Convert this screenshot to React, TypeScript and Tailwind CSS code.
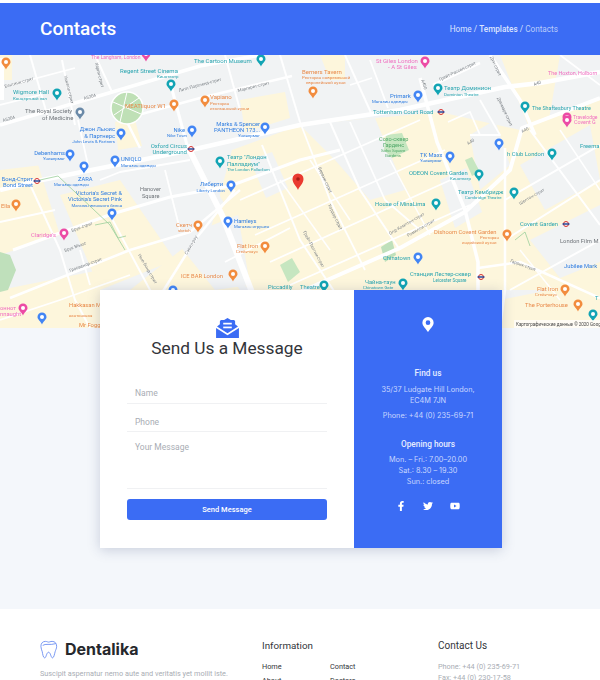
import React from 'react';
import { FaFacebookF, FaTwitter, FaYoutube } from 'react-icons/fa';

const BLUE = '#2f7de1';
const TEAL = '#2aa5b0';
const ORANGE = '#e98a4a';
const PINK = '#f06fc0';
const GRAY = '#70757a';
const GREEN = '#4fa868';
const P_BLUE = '#4285f4';
const P_TEAL = '#12a4b4';
const P_ORANGE = '#f28c3e';
const P_PINK = '#ec4ba5';

// coordinates below are page coordinates, the map's viewBox starts at y=55
const yellowBlocks = [
  '232,150 300,125 440,112 520,130 600,100 600,290 250,290 205,250',
  '0,160 36,158 60,235 0,255',
  '60,195 120,180 175,260 100,290',
  '130,290 200,235 240,290',
  '240,100 285,92 290,118 245,132',
  '500,55 560,55 548,125 528,125',
  '500,300 600,280 600,328 500,328',
  '0,290 100,270 100,328 0,328',
  '115,122 134,116 142,146 118,150',
  '320,55 345,55 345,80 330,80',
  '0,55 12,55 12,80 0,80',
];

const grayBlocks = [
  '250,160 272,152 288,188 266,198',
  '300,125 375,118 405,190 370,200 335,160',
  '440,180 466,168 482,212 455,228',
  '520,165 590,125 600,180 545,210',
  '530,240 600,205 600,262 560,278',
  '125,165 195,152 225,205 160,222',
  '175,240 238,215 250,285 215,290',
  '0,125 70,125 85,160 0,170',
  '470,135 495,120 510,165 480,190',
];

const mainRoads: [string, number][] = [
  ['0,190 37,181 191,150 300,125 400,110 505,87 540,83 600,72', 4.5],
  ['187,145 222,215 255,300', 6],
  ['170,82 187,145', 3],
  ['127,122 140,148', 2.5],
  ['0,125 92,98 200,66 260,55', 3.5],
  ['127,118 200,98 292,76', 2.5],
  ['13,250 112,214 170,197 230,186 300,160 340,150', 3],
  ['10,298 130,250 190,232 240,190', 2.5],
  ['300,292 400,248 465,212 510,170 522,128 600,98', 4],
  ['420,78 437,142 465,210 478,262 478,290', 3.5],
  ['490,55 520,100 535,135', 3.5],
  ['505,148 505,290 500,328', 2.5],
  ['478,268 520,262 600,298', 2.5],
  ['160,296 195,240 235,190', 2.5],
  ['110,215 150,290 170,328', 2],
  ['28,180 60,250 75,300 90,328', 2],
  ['262,145 300,240 340,300', 2],
  ['330,122 360,190 400,250', 2],
  ['300,122 330,200 365,270', 1.8],
  ['350,122 385,200 420,230', 1.8],
  ['240,200 420,120', 1.8],
  ['255,235 445,150', 1.8],
  ['270,262 455,178', 1.8],
  ['290,285 470,205', 1.8],
  ['280,180 330,250', 1.5],
  ['310,160 350,220', 1.5],
  ['390,160 430,235', 1.5],
  ['505,200 600,145', 2],
  ['505,240 600,180', 2],
  ['510,290 600,240', 2],
  ['530,130 600,225', 2],
  ['560,130 600,190', 1.5],
  ['520,250 560,300', 1.5],
  ['433,85 480,63', 2.5],
  ['480,100 500,135 470,135', 1.8],
  ['448,122 470,112 480,135', 1.8],
  ['30,55 48,118', 2],
  ['62,60 75,125', 2],
  ['95,55 112,92', 2],
  ['0,88 75,68', 1.8],
  ['0,105 40,95', 1.8],
  ['78,120 88,165', 1.8],
  ['225,55 240,110', 2],
  ['280,55 300,122', 2],
  ['345,55 372,115', 2],
  ['560,55 600,85', 1.8],
  ['0,222 55,210', 1.8],
  ['100,180 120,172 190,160', 1.8],
  ['165,170 180,230', 1.8],
  ['225,262 290,228', 1.8],
  ['0,320 60,300 130,275', 1.8],
  ['80,250 90,285', 1.8],
  ['370,60 388,108', 1.8],
  ['350,85 372,78', 1.5],
];

const parks = [
  { d: 'M386,135 L402,133 L409,150 L392,158 L384,150 Z', fill: '#c6e6c0' },
  { d: 'M381,247 L392,240 L396,255 L385,262 Z', fill: '#bfe0bb' },
  { d: 'M465,160 L472,157 L480,172 L472,176 Z', fill: '#c6e6c0' },
  { d: 'M280,265 L292,258 L300,272 L288,282 Z', fill: '#c6e6c0' },
  { d: 'M0,252 L10,255 L16,270 L8,290 L0,292 Z', fill: '#bfe0bb' },
];

type Label = { x: number; y: number; t: string; c: string; s?: number; a?: 'start' | 'end' };

const labels: Label[] = [
  { x: 91, y: 59, t: 'The Langham, London', c: PINK, s: 5 },
  { x: 194, y: 63, t: 'The Cartoon Museum', c: TEAL, s: 6 },
  { x: 120, y: 73, t: 'Regent Street Cinema', c: TEAL, s: 6 },
  { x: 157, y: 78, t: 'Кинотеатр', c: TEAL, s: 4.4 },
  { x: 13, y: 94, t: 'Wigmore Hall', c: TEAL, s: 6 },
  { x: 13, y: 100, t: 'Концертный зал', c: TEAL, s: 4.4 },
  { x: 25, y: 113, t: 'The Royal Society', c: GRAY, s: 6 },
  { x: 42, y: 120, t: 'of Medicine', c: GRAY, s: 6 },
  { x: 125, y: 108, t: 'MEATliquor W1', c: ORANGE, s: 6 },
  { x: 210, y: 99, t: 'Vapiano', c: ORANGE, s: 6 },
  { x: 210, y: 105, t: 'Ресторан', c: ORANGE, s: 4.4 },
  { x: 210, y: 110, t: 'итальянской кухни', c: ORANGE, s: 4.4 },
  { x: 302, y: 74, t: 'Berners Tavern', c: ORANGE, s: 6 },
  { x: 302, y: 79, t: 'Ресторан современной', c: ORANGE, s: 4.4 },
  { x: 306, y: 84, t: 'европейской кухни', c: ORANGE, s: 4.4 },
  { x: 376, y: 63, t: 'St Giles London', c: PINK, s: 6 },
  { x: 388, y: 69, t: '- A St Giles', c: PINK, s: 6 },
  { x: 444, y: 90, t: 'Театр Доминион', c: TEAL, s: 6 },
  { x: 444, y: 96, t: 'Dominion Theatre', c: TEAL, s: 4.4 },
  { x: 390, y: 98, t: 'Primark', c: BLUE, s: 6 },
  { x: 372, y: 103, t: 'Магазин одежды', c: BLUE, s: 4.4 },
  { x: 373, y: 114, t: 'Tottenham Court Road', c: TEAL, s: 6 },
  { x: 532, y: 110, t: 'The Shaftesbury Theatre', c: TEAL, s: 5.4 },
  { x: 548, y: 75, t: 'The Hoxton, Holborn', c: PINK, s: 5.4 },
  { x: 573, y: 119, t: 'Travelodge', c: PINK, s: 5 },
  { x: 115, y: 131, t: 'Джон Льюис', c: BLUE, s: 5.8, a: 'end' },
  { x: 115, y: 138, t: '& Партнерс', c: BLUE, s: 5.8, a: 'end' },
  { x: 115, y: 143, t: 'John Lewis & Partners', c: BLUE, s: 4.3, a: 'end' },
  { x: 185, y: 132, t: 'Nike', c: BLUE, s: 5.8, a: 'end' },
  { x: 187, y: 137, t: 'Nike Town', c: BLUE, s: 4.3, a: 'end' },
  { x: 260, y: 126, t: 'Marks & Spencer', c: BLUE, s: 5.8, a: 'end' },
  { x: 260, y: 132, t: 'PANTHEON 173...', c: BLUE, s: 5.8, a: 'end' },
  { x: 260, y: 137, t: 'Универмаг', c: BLUE, s: 4.3, a: 'end' },
  { x: 187, y: 148, t: 'Oxford Circus', c: TEAL, s: 6, a: 'end' },
  { x: 187, y: 154, t: 'Underground', c: TEAL, s: 6, a: 'end' },
  { x: 65, y: 155, t: 'Debenhams', c: BLUE, s: 5.8, a: 'end' },
  { x: 65, y: 160, t: 'Универмаг', c: BLUE, s: 4.3, a: 'end' },
  { x: 121, y: 161, t: 'UNIQLO', c: BLUE, s: 5.8 },
  { x: 121, y: 167, t: 'Магазин одежды', c: BLUE, s: 4.3 },
  { x: 227, y: 159, t: 'Театр "Лондон', c: TEAL, s: 5.8 },
  { x: 227, y: 166, t: 'Палладиум"', c: TEAL, s: 5.8 },
  { x: 227, y: 171, t: 'The London Palladium', c: TEAL, s: 4.3 },
  { x: 78, y: 181, t: 'ZARA', c: BLUE, s: 5.8 },
  { x: 54, y: 186, t: 'Магазин одежды', c: BLUE, s: 4.3 },
  { x: 33, y: 181, t: 'Бонд-Стрит', c: BLUE, s: 5.8, a: 'end' },
  { x: 33, y: 187, t: 'Bond Street', c: BLUE, s: 5.8, a: 'end' },
  { x: 1, y: 208, t: 'Ella', c: ORANGE, s: 5.8 },
  { x: 223, y: 186, t: 'Либерти', c: BLUE, s: 5.8, a: 'end' },
  { x: 225, y: 192, t: 'Liberty London', c: BLUE, s: 4.3, a: 'end' },
  { x: 140, y: 191, t: 'Hanover', c: GRAY, s: 5.6 },
  { x: 142, y: 198, t: 'Square', c: GRAY, s: 5.6 },
  { x: 122, y: 195, t: "Victoria's Secret &", c: BLUE, s: 5.8, a: 'end' },
  { x: 122, y: 201, t: "Victoria's Secret Pink", c: BLUE, s: 5.8, a: 'end' },
  { x: 122, y: 207, t: 'Магазин женского белья', c: BLUE, s: 4.3, a: 'end' },
  { x: 31, y: 237, t: "Claridge's", c: PINK, s: 5.8 },
  { x: 234, y: 223, t: 'Hamleys', c: BLUE, s: 5.8 },
  { x: 234, y: 228, t: 'Магазин игрушек', c: BLUE, s: 4.3 },
  { x: 176, y: 227, t: 'Скетч', c: ORANGE, s: 5.8 },
  { x: 178, y: 232, t: 'sketch', c: ORANGE, s: 4.3 },
  { x: 237, y: 248, t: 'Flat Iron', c: ORANGE, s: 5.8 },
  { x: 236, y: 253, t: 'Стейк-хаус', c: ORANGE, s: 4.3 },
  { x: 181, y: 278, t: 'ICE BAR London', c: ORANGE, s: 5.8 },
  { x: 69, y: 307, t: 'Hakkasan Mayfair', c: ORANGE, s: 5.8 },
  { x: 69, y: 317, t: 'кантонская', c: ORANGE, s: 4.3 },
  { x: 79, y: 327, t: "Mr Fogg's", c: ORANGE, s: 5.8 },
  { x: 0, y: 310, t: 'оннот', c: PINK, s: 5.8 },
  { x: 0, y: 316, t: 'nnaught', c: PINK, s: 5.8 },
  { x: 379, y: 141, t: 'Сохо-сквер', c: GREEN, s: 5.6 },
  { x: 383, y: 147, t: 'Гарденс', c: GREEN, s: 5.6 },
  { x: 381, y: 152, t: 'Soho Square', c: GREEN, s: 4.3 },
  { x: 385, y: 157, t: 'Gardens', c: GREEN, s: 4.3 },
  { x: 420, y: 157, t: 'TK Maxx', c: BLUE, s: 5.8 },
  { x: 420, y: 162, t: 'Универмаг', c: BLUE, s: 4.3 },
  { x: 409, y: 175, t: 'ODEON Covent Garden', c: TEAL, s: 5.8 },
  { x: 450, y: 180, t: 'Кинотеатр', c: TEAL, s: 4.3 },
  { x: 458, y: 194, t: 'Театр Кембридж', c: TEAL, s: 5.8 },
  { x: 465, y: 199, t: 'Cambridge Theatre', c: TEAL, s: 4.3 },
  { x: 375, y: 206, t: 'House of MinaLima', c: TEAL, s: 5.8 },
  { x: 434, y: 234, t: 'Dishoom Covent Garden', c: ORANGE, s: 5.8 },
  { x: 480, y: 239, t: 'Ресторан', c: ORANGE, s: 4.3 },
  { x: 462, y: 244, t: 'индийской кухни', c: ORANGE, s: 4.3 },
  { x: 520, y: 226, t: 'Covent Garden', c: TEAL, s: 5.8 },
  { x: 560, y: 243, t: 'London Film M', c: GRAY, s: 5.8 },
  { x: 564, y: 268, t: 'Jubilee Mark', c: BLUE, s: 5.8 },
  { x: 383, y: 260, t: 'Chinatown', c: TEAL, s: 5.8 },
  { x: 410, y: 276, t: 'Станция Лестер-сквер', c: TEAL, s: 5.8 },
  { x: 433, y: 282, t: 'Leicester Square', c: TEAL, s: 4.5 },
  { x: 365, y: 284, t: 'Чайна-таун', c: TEAL, s: 5.8 },
  { x: 363, y: 289, t: 'Chinatown Gate', c: TEAL, s: 4.3 },
  { x: 300, y: 289, t: 'Theatre', c: TEAL, s: 5.8 },
  { x: 268, y: 289, t: 'Piccadilly', c: TEAL, s: 5.8 },
  { x: 537, y: 291, t: 'Flat Iron', c: ORANGE, s: 5.8 },
  { x: 535, y: 296, t: 'Стейк-хаус', c: ORANGE, s: 4.3 },
  { x: 525, y: 307, t: 'The Porterhouse', c: ORANGE, s: 5.8 },
  { x: 507, y: 156, t: 'h Club London', c: TEAL, s: 5.8 },
  { x: 580, y: 148, t: 'Freema', c: TEAL, s: 5.8 },
  { x: 574, y: 124, t: 'Covent G', c: PINK, s: 5.4 },
  { x: 595, y: 300, t: 'T', c: TEAL, s: 5.8 },
];

const streetNames: { x: number; y: number; t: string; r: number }[] = [
  { x: 84, y: 100, t: 'A5204', r: -16 },
  { x: 3, y: 122, t: 'A5204', r: -16 },
  { x: 5, y: 88, t: 'Бентинк-стрит', r: -16 },
  { x: 64, y: 76, t: 'Уимпол-стрит', r: 76 },
  { x: 95, y: 63, t: 'Харли-стрит', r: 76 },
  { x: 179, y: 92, t: 'Литл-Портленд-стрит', r: -15 },
  { x: 238, y: 92, t: 'Маргарет-стрит', r: -14 },
  { x: 72, y: 232, t: 'Брук-стрит', r: -20 },
  { x: 70, y: 272, t: 'Гросвенор-стрит', r: -20 },
  { x: 65, y: 252, t: 'Брук Мьюс', r: -20 },
  { x: 138, y: 255, t: 'Нью-Бонд-стрит', r: 60 },
  { x: 187, y: 255, t: 'Сэвил-роу', r: -60 },
  { x: 421, y: 80, t: 'A400', r: 72 },
  { x: 440, y: 81, t: 'Грейт-Рассел-стрит', r: -25 },
  { x: 468, y: 145, t: 'A40', r: -30 },
  { x: 534, y: 86, t: 'A40', r: -20 },
  { x: 522, y: 133, t: 'A40', r: -25 },
  { x: 490, y: 57, t: 'Дин-стрит', r: 65 },
  { x: 497, y: 98, t: 'Денмарк-стрит', r: 65 },
  { x: 390, y: 235, t: 'Олд-Комптон-стрит', r: -30 },
  { x: 408, y: 237, t: 'Ромилли-стрит', r: -30 },
  { x: 520, y: 205, t: 'Шелтон-стрит', r: -30 },
  { x: 510, y: 262, t: 'Гаррик-стрит', r: 20 },
  { x: 318, y: 168, t: 'Бервик-стрит', r: 65 },
  { x: 328, y: 205, t: 'Уордор-стрит', r: 65 },
  { x: 303, y: 232, t: 'Грейт-Палтни-стрит', r: 62 },
];

type Pin = { x: number; y: number; c: string };

const pins: Pin[] = [
  { x: 6, y: 63, c: P_ORANGE }, { x: 146, y: 55, c: P_PINK }, { x: 261, y: 60, c: P_TEAL },
  { x: 171, y: 85, c: P_TEAL }, { x: 57, y: 94, c: P_TEAL }, { x: 80, y: 113, c: '#6b8aa8' },
  { x: 174, y: 105, c: P_ORANGE }, { x: 205, y: 101, c: P_ORANGE }, { x: 313, y: 92, c: P_ORANGE },
  { x: 425, y: 62, c: P_PINK }, { x: 438, y: 89, c: P_TEAL }, { x: 418, y: 96, c: P_BLUE },
  { x: 525, y: 107, c: P_TEAL }, { x: 567, y: 118, c: P_PINK }, { x: 121, y: 134, c: P_BLUE },
  { x: 192, y: 131, c: P_BLUE }, { x: 265, y: 128, c: P_BLUE }, { x: 70, y: 155, c: P_BLUE },
  { x: 115, y: 161, c: P_BLUE }, { x: 220, y: 162, c: P_TEAL }, { x: 84, y: 167, c: P_BLUE },
  { x: 16, y: 205, c: P_ORANGE }, { x: 231, y: 186, c: P_BLUE }, { x: 112, y: 214, c: P_BLUE },
  { x: 64, y: 234, c: P_PINK }, { x: 228, y: 222, c: P_BLUE }, { x: 198, y: 226, c: P_ORANGE },
  { x: 265, y: 247, c: P_ORANGE }, { x: 233, y: 275, c: P_ORANGE }, { x: 23, y: 309, c: P_PINK },
  { x: 42, y: 318, c: P_BLUE }, { x: 173, y: 291, c: P_BLUE }, { x: 450, y: 157, c: P_BLUE },
  { x: 479, y: 175, c: P_TEAL }, { x: 514, y: 193, c: P_TEAL }, { x: 436, y: 204, c: P_TEAL },
  { x: 507, y: 235, c: P_ORANGE }, { x: 418, y: 258, c: P_BLUE }, { x: 403, y: 284, c: P_TEAL },
  { x: 324, y: 286, c: P_TEAL }, { x: 565, y: 290, c: P_ORANGE }, { x: 578, y: 305, c: P_ORANGE },
  { x: 552, y: 154, c: P_TEAL }, { x: 499, y: 144, c: P_BLUE }, { x: 567, y: 121, c: P_PINK },
  { x: 593, y: 315, c: P_TEAL },
];

const tubes = [[441, 112], [191, 149], [37, 181], [566, 224], [481, 277]];

function LondonMap() {
  return (
    <svg viewBox="0 55 600 273" className="block h-[273px] w-[600px] blur-[0.4px]" style={{ fontFamily: 'Roboto, sans-serif' }}>
      <rect x="0" y="55" width="600" height="273" fill="#f1f3f4" />
      {yellowBlocks.map((p) => <polygon key={p} points={p} fill="#fdf6dc" />)}
      {grayBlocks.map((p) => <polygon key={p} points={p} fill="#f1f3f4" />)}
      {parks.map((p) => <path key={p.d} d={p.d} fill={p.fill} />)}
      {mainRoads.map(([p, w]) => (
        <polyline key={p} points={p} fill="none" stroke="#ffffff" strokeWidth={w} strokeLinejoin="round" />
      ))}
      <circle cx="127" cy="108" r="16" fill="#bfe0b6" stroke="#ffffff" strokeWidth="1.5" />
      <path d="M113,102 L141,114 M127,92 L120,122 M114,115 L139,98" stroke="#ffffff" strokeWidth="1" />
      <polyline points="40,180 58,176 110,225 125,250" fill="none" stroke="#9ccf9c" strokeWidth="0.8" />
      <polyline points="95,225 110,222 118,238 126,236" fill="none" stroke="#9ccf9c" strokeWidth="0.8" />
      <polyline points="515,240 525,232 530,246" fill="none" stroke="#9ccf9c" strokeWidth="0.8" />
      <rect x="0" y="58" width="4" height="42" fill="#ffffff" />
      {streetNames.map((s) => (
        <text key={s.t + s.x} x={s.x} y={s.y} fontSize="4.4" fill="#80868b" transform={`rotate(${s.r} ${s.x} ${s.y})`}>{s.t}</text>
      ))}
      {labels.map((l) => (
        <text key={l.t + l.x + l.y} x={l.x} y={l.y} fontSize={l.s} fill={l.c} textAnchor={l.a ?? 'start'}>{l.t}</text>
      ))}
      {pins.map((p) => (
        <g key={`${p.x}-${p.y}`}>
          <path d={`M${p.x - 4.5},${p.y - 1} a4.5,4.5 0 1 1 9,0 c0,2.5 -3,4 -4.5,7.5 c-1.5,-3.5 -4.5,-5 -4.5,-7.5 z`} fill={p.c} />
          <circle cx={p.x} cy={p.y - 1} r="2" fill="#ffffff" />
        </g>
      ))}
      {tubes.map(([x, y]) => (
        <g key={x}>
          <circle cx={x} cy={y} r="2.5" fill="none" stroke="#d5302f" strokeWidth="1" />
          <rect x={x - 3.5} y={y - 0.7} width="7" height="1.4" fill="#1c3f94" />
        </g>
      ))}
      <path d="M298,190 c-1.5,-4 -5.5,-6.5 -5.5,-11 a5.5,5.5 0 1 1 11,0 c0,4.5 -4,7 -5.5,11 z" fill="#ea3a30" />
      <circle cx="298" cy="179" r="1.8" fill="#a81c16" />
      <rect x="514" y="320" width="86" height="8" fill="#ffffff" fillOpacity="0.7" />
      <text x="516" y="326" fontSize="4.5" fill="#444">Картографические данные © 2020 Goog</text>
    </svg>
  );
}

function MailIcon() {
  return (
    <svg viewBox="0 0 24 21" className="h-[20px] w-[23px]" fill="#3b6cf4">
      <path d="M12 0 15.500 2H19l1 1.500V6.500l3 2.500-11 7L1 9l3-2.500v-3L5 2h3.500Z" />
      <path d="M0 10.500 12 18l12-7.500V21H0Z" />
      <rect x="7.500" y="5" width="9" height="1.800" fill="#ffffff" />
      <rect x="7.500" y="9" width="9" height="1.800" fill="#ffffff" />
    </svg>
  );
}

function ToothIcon() {
  return (
    <svg viewBox="0 0 20 20" className="h-[19px] w-[18px]" fill="none" stroke="#5b82f0" strokeWidth="0.9">
      <path d="M6 1C3 1 1 3 1 6.500c0 2.500 1 4 1.500 6C3 15 3.500 19 5 19.300c2 .4 2-6 4.500-6.300 2.500.3 2.500 6.500 4.500 6.300 1.500-.3 2-4 2.800-6.800.5-2 1.700-3.500 1.700-6 0-3.500-2-5.500-5-5.500-2 0-3 .8-4 .8S8 1 6 1Z" />
      <path d="M3 5.500C6 3 11 5.500 17.500 3.500" />
    </svg>
  );
}

function MessageForm() {
  const fieldClass = 'w-full border-b border-[#f0f1f3] bg-transparent pl-2 text-[8.500px] text-[#333] outline-none placeholder:text-[#a9adb4]';
  return (
    <div className="bg-white px-[27px] pt-[28px]">
      <div className="flex flex-col items-center">
        <MailIcon />
        <h2 className="text-[17.300px] leading-[20px] text-[#33353a]">Send Us a Message</h2>
      </div>
      <form className="mt-[17px] flex flex-col">
        <input placeholder="Name" className={`${fieldClass} h-[29px] pt-[8px]`} />
        <input placeholder="Phone" className={`${fieldClass} h-[28px] pt-[8px]`} />
        <textarea placeholder="Your Message" className={`${fieldClass} h-[57px] resize-none pt-[9px]`} />
        <button type="button" className="mt-[10px] h-[21px] w-full rounded-[3px] bg-[#3b6cf4] text-[7.500px] font-medium text-white">
          Send Message
        </button>
      </form>
    </div>
  );
}

function ContactPanel() {
  const bodyFont = { fontFamily: 'Inter, sans-serif' };
  return (
    <div className="flex flex-col items-center bg-[#3b6cf4] pt-[27px] text-center text-[7.300px] leading-[11px] text-[#c9d7ff]">
      <svg viewBox="0 0 12 16" className="h-[15px] w-[12px]" fill="#ffffff">
        <path fillRule="evenodd" d="M6 0a6 6 0 0 1 6 6c0 3.500-4 6.500-6 10C4 12.500 0 9.500 0 6a6 6 0 0 1 6-6Zm0 3.500a2.500 2.500 0 1 0 0 5 2.500 2.500 0 0 0 0-5Z" />
      </svg>
      <h4 className="mt-[35px] text-[8.300px] font-medium leading-[12px] text-[#e6ecff]">Find us</h4>
      <p className="mt-[5px]" style={bodyFont}>35/37 Ludgate Hill London,<br />EC4M 7JN</p>
      <p className="mt-[4px]" style={bodyFont}>Phone: +44 (0) 235-69-71</p>
      <h4 className="mt-[17px] text-[8.300px] font-medium leading-[12px] text-[#e6ecff]">Opening hours</h4>
      <p className="mt-[4px]" style={bodyFont}>Mon. – Fri.: 7.00–20.00<br />Sat.: 8.30 – 19.30<br />Sun.: closed</p>
      <div className="mt-[14px] flex items-center gap-[17px] text-white">
        <FaFacebookF className="h-[10px] w-[10px]" />
        <FaTwitter className="h-[10px] w-[10px]" />
        <FaYoutube className="h-[10px] w-[10px]" />
      </div>
    </div>
  );
}

function Footer() {
  return (
    <footer className="grid grid-cols-[222px_176px_1fr] bg-white px-[40px] pt-[30px]">
      <div>
        <div className="flex items-center gap-[7px]">
          <ToothIcon />
          <span className="text-[16px] font-bold leading-[20px] text-[#26282c]" style={{ fontFamily: 'Inter, sans-serif' }}>Dentalika</span>
        </div>
        <p className="mt-[9px] whitespace-nowrap text-[7.300px] leading-[12px] text-[#a9adb4]">
          Suscipit aspernatur nemo aute and veritatis yet mollit iste.
        </p>
      </div>
      <div>
        <h5 className="text-[9.800px] leading-[14px] text-[#33353a]">Information</h5>
        <ul className="mt-[8px] grid grid-cols-[68px_1fr] gap-y-[3px] text-[7.300px] leading-[11px] text-[#33353a]">
          <li>Home</li>
          <li>Contact</li>
          <li>About</li>
          <li>Doctors</li>
        </ul>
      </div>
      <div>
        <h5 className="text-[10px] leading-[14px] text-[#33353a]">Contact Us</h5>
        <p className="mt-[8px] text-[7.300px] leading-[11px] text-[#a9adb4]">
          Phone: +44 (0) 235-69-71<br />Fax: +44 (0) 230-17-58
        </p>
      </div>
    </footer>
  );
}

export default function App() {
  return (
    <div className="h-[680px] w-[600px] overflow-hidden bg-white pt-[3px]" style={{ fontFamily: 'Roboto, sans-serif' }}>
      <header className="flex h-[52px] items-center justify-between bg-[#3b6cf4] pl-[40px] pr-[42px]">
        <h1 className="text-[19px] font-medium text-white">Contacts</h1>
        <nav className="text-[8.200px] text-[#dbe4ff]">
          Home / <span className="font-medium">Templates</span> / <span className="text-[#b9ccfb]">Contacts</span>
        </nav>
      </header>
      <LondonMap />
      <section className="bg-[#f4f7fb] pb-[61px]">
        <div className="relative -mt-[38px] ml-[100px] grid h-[258px] w-[402px] grid-cols-[254px_148px] shadow-[0_2px_12px_rgba(40,60,110,0.22)]">
          <MessageForm />
          <ContactPanel />
        </div>
      </section>
      <Footer />
    </div>
  );
}
